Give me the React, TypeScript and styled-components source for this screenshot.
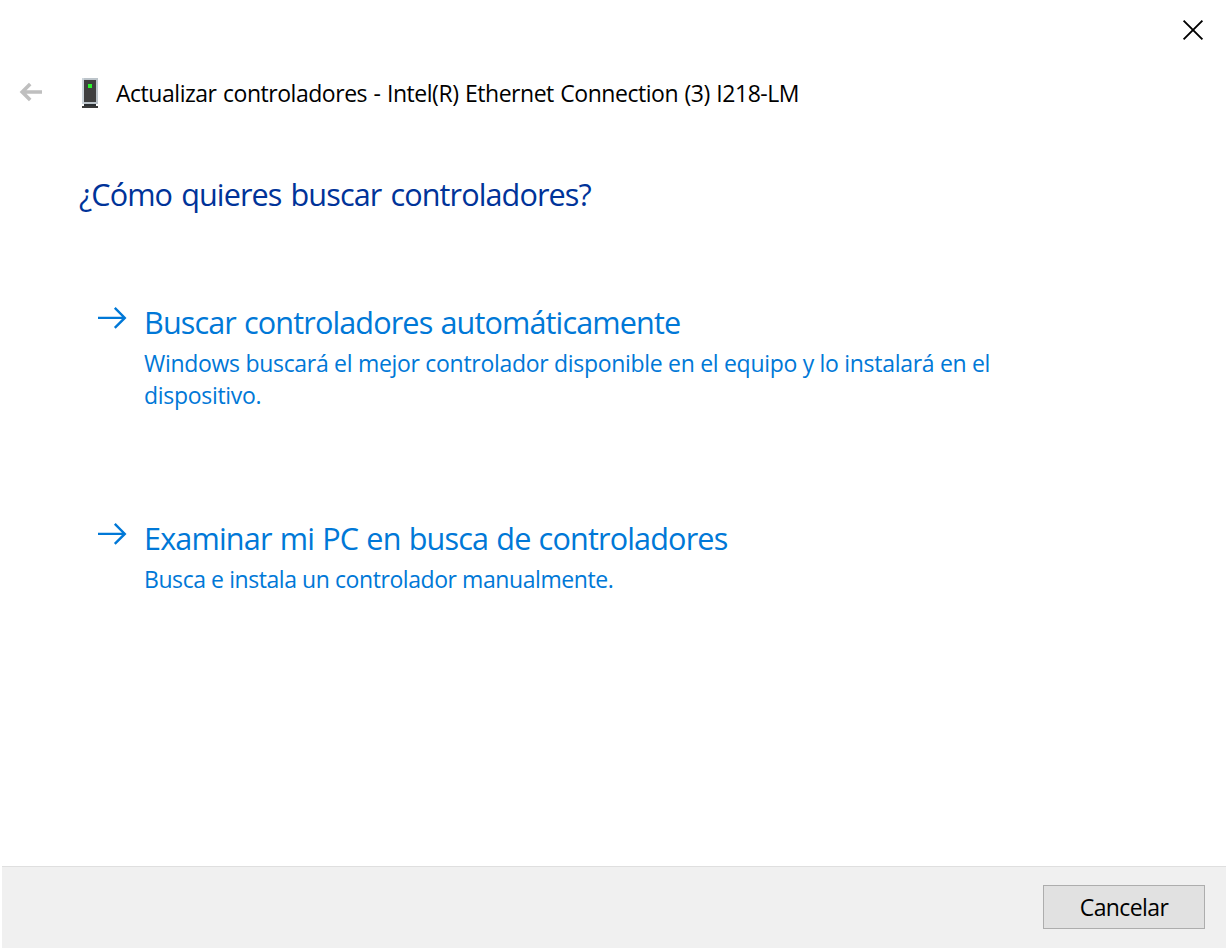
import React from 'react';
import styled, { createGlobalStyle } from 'styled-components';

const GlobalStyle = createGlobalStyle`
  * {
    box-sizing: border-box;
  }

  body {
    margin: 0;
    background: #ffffff;
    font-family: 'Open Sans', 'Noto Sans', sans-serif;
  }
`;

const Dialog = styled.div`
  display: flex;
  flex-direction: column;
  width: 1228px;
  height: 950px;
  padding: 0 2px 2px;
  background: #ffffff;
`;

const TitleBar = styled.div`
  display: flex;
  justify-content: flex-end;
  height: 60px;
  padding: 19px 22px 0 0;
`;

const CloseButton = styled.button`
  width: 22px;
  height: 22px;
  padding: 0;
  border: none;
  background: none;
  line-height: 0;
  cursor: pointer;
`;

const Header = styled.header`
  display: flex;
  align-items: flex-start;
  height: 112px;
  padding-left: 17px;
`;

const BackButton = styled.button`
  width: 24px;
  height: 22px;
  margin: 21px 39px 0 0;
  padding: 0;
  border: none;
  background: none;
  line-height: 0;
`;

const DeviceIcon = styled.svg`
  width: 16px;
  height: 30px;
  margin: 18px 18px 0 0;
`;

const Title = styled.h1`
  margin: 17px 0 0;
  color: #000000;
  font-size: 23px;
  font-weight: 400;
  line-height: 32px;
  letter-spacing: -0.47px;
  word-spacing: 1px;
  white-space: nowrap;
`;

const Content = styled.main`
  flex: 1;
  padding-left: 77px;
`;

const Question = styled.h2`
  margin: 0 0 80px;
  color: #003399;
  font-size: 30.6px;
  font-weight: 400;
  line-height: 44px;
  letter-spacing: -0.9px;
  word-spacing: 2px;
  white-space: nowrap;
`;

const Option = styled.button`
  display: flex;
  align-items: flex-start;
  width: 1000px;
  height: 216px;
  padding: 0 0 0 19px;
  border: none;
  background: none;
  color: #0078d7;
  font-family: inherit;
  text-align: left;
  cursor: pointer;
`;

const ArrowIcon = styled.svg`
  flex: none;
  width: 30px;
  height: 24px;
  margin: 10px 16px 0 0;
`;

const OptionTitle = styled.div<{ $spacing: number }>`
  padding: 2px 0 1px;
  font-size: 30.6px;
  line-height: 48px;
  letter-spacing: ${({ $spacing }) => $spacing}px;
  word-spacing: 1px;
  white-space: nowrap;
`;

const OptionText = styled.div<{ $spacing: number }>`
  font-size: 23px;
  line-height: 32px;
  letter-spacing: ${({ $spacing }) => $spacing}px;
  white-space: pre;
`;

const Footer = styled.footer`
  display: flex;
  justify-content: flex-end;
  height: 82px;
  padding: 18px 21px 0 0;
  border-top: 1px solid #dfdfdf;
  background: #f0f0f0;
`;

const CancelButton = styled.button`
  width: 162px;
  height: 44px;
  padding: 0 0 1px;
  border: 1px solid #adadad;
  background: #e1e1e1;
  color: #000000;
  font-family: inherit;
  font-size: 23px;
  letter-spacing: -0.6px;
  cursor: pointer;
`;

interface SearchOptionProps {
    title: string;
    text: string;
    titleSpacing: number;
    textSpacing: number;
}

const SearchOption: React.FC<SearchOptionProps> = ({ title, text, titleSpacing, textSpacing }) => (
    <Option>
        <ArrowIcon viewBox="0 0 30 24" fill="none" stroke="currentColor" strokeWidth="2.4">
            <path d="M0 11.9h27M16.8 1.9L26.8 11.9L16.8 21.9" />
        </ArrowIcon>
        <div>
            <OptionTitle $spacing={titleSpacing}>{title}</OptionTitle>
            <OptionText $spacing={textSpacing}>{text}</OptionText>
        </div>
    </Option>
);

const App: React.FC = () => (
    <>
        <GlobalStyle />
        <Dialog>
            <TitleBar>
                <CloseButton aria-label="Cerrar">
                    <svg width="22" height="22" viewBox="0 0 22 22" stroke="#000000" strokeWidth="1.9">
                        <path d="M1.6 1.6L20.4 20.4M20.4 1.6L1.6 20.4" />
                    </svg>
                </CloseButton>
            </TitleBar>
            <Header>
                <BackButton aria-label="Atrás" disabled>
                    <svg width="24" height="22" viewBox="0 0 24 22" fill="none" stroke="#bfbfbf" strokeWidth="3.6">
                        <path d="M23 11H3.5M11.2 3L3.2 11L11.2 19" />
                    </svg>
                </BackButton>
                <DeviceIcon viewBox="0 0 16 30" shapeRendering="crispEdges">
                    <rect width="16" height="26" fill="#bcc4ca" />
                    <rect width="2" height="26" fill="#cdd5db" />
                    <rect x="2" y="2" width="12" height="22" fill="#404040" />
                    <rect x="6" y="6" width="4" height="4" fill="#2cf52c" />
                    <rect x="2" y="26" width="12" height="2" fill="#2d3134" />
                    <rect y="28" width="16" height="2" fill="#3a3a3a" />
                </DeviceIcon>
                <Title>Actualizar controladores - Intel(R) Ethernet Connection (3) I218-LM</Title>
            </Header>
            <Content>
                <Question>¿Cómo quieres buscar controladores?</Question>
                <SearchOption
                    title="Buscar controladores automáticamente"
                    text={'Windows buscará el mejor controlador disponible en el equipo y lo instalará en el\ndispositivo.'}
                    titleSpacing={-0.88}
                    textSpacing={-0.3}
                />
                <SearchOption
                    title="Examinar mi PC en busca de controladores"
                    text="Busca e instala un controlador manualmente."
                    titleSpacing={-0.84}
                    textSpacing={-0.43}
                />
            </Content>
            <Footer>
                <CancelButton>Cancelar</CancelButton>
            </Footer>
        </Dialog>
    </>
);

export default App;
